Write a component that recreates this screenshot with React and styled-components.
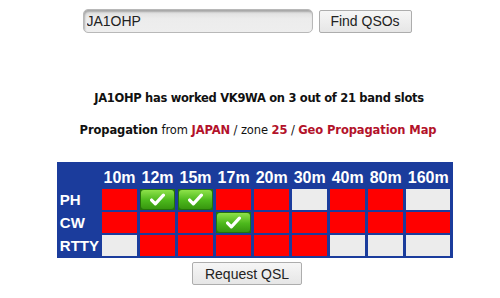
import React from 'react';
import styled, { createGlobalStyle } from 'styled-components';

const GlobalStyle = createGlobalStyle`
  body {
    margin: 0;
    background: #ffffff;
    font-family: "Liberation Sans", Arial, sans-serif;
  }
`;

const Page = styled.div`
  width: 500px;
  padding: 9px 0 0 10px;
  box-sizing: border-box;
  display: flex;
  flex-direction: column;
  align-items: center;
`;

const SearchRow = styled.form`
  display: flex;
  align-items: center;
  gap: 6px;
  margin-left: -16px;
`;

const CallInput = styled.input`
  width: 230px;
  height: 24px;
  box-sizing: border-box;
  border: 1px solid #b8b8b8;
  border-radius: 5px;
  background: linear-gradient(#dcdcdc, #ececec 40%, #eeeeee);
  box-shadow: inset 1px 2px 2px rgba(0, 0, 0, 0.25);
  padding: 2px 3px;
  font-family: "Liberation Sans", Arial, sans-serif;
  font-size: 14px;
  color: #222;
  outline: none;
`;

const Button = styled.button`
  height: 23px;
  padding: 0 8px;
  border: 1px solid #adadad;
  border-radius: 2px;
  background: linear-gradient(#f6f6f6, #e6e6e6);
  font-family: "Liberation Sans", Arial, sans-serif;
  font-size: 14px;
  color: #222;
  cursor: pointer;
  width: ${p => p.$width || 'auto'};
`;

const Summary = styled.p`
  margin: 58px 0 0 8px;
  font-family: "DejaVu Sans", Verdana, sans-serif;
  font-size: 11.5px;
  font-weight: bold;
  color: #111;
  letter-spacing: -0.3px;
  line-height: 14px;
`;

const Propagation = styled.p`
  margin: 18px 0 0 6px;
  font-family: "DejaVu Sans", Verdana, sans-serif;
  font-size: 11.5px;
  color: #111;
  line-height: 14px;
  letter-spacing: -0.1px;
`;

const Strong = styled.b`
  color: ${p => (p.$red ? '#b3122a' : '#111')};
`;

const Grid = styled.table`
  margin-top: 25px;
  background: #1b3c9c;
  border-collapse: separate;
  border-spacing: 3px 2px;
  font-family: "Liberation Sans", Arial, sans-serif;
  font-weight: bold;
  color: #fff;
`;

const BandHead = styled.th`
  font-size: 16px;
  height: 23px;
  padding: 0 1.5px;
  text-align: center;
  vertical-align: bottom;
  white-space: nowrap;
`;

const ModeHead = styled.th`
  font-size: 15px;
  padding: 0;
  text-align: left;
  width: 34px;
  white-space: nowrap;
`;

const Slot = styled.td`
  height: 21px;
  padding: 0;
  background: ${p => (p.$state === 'ok' ? '#25720b' : p.$state === 'no' ? '#ff0000' : '#ececec')};
  text-align: center;
  vertical-align: middle;
`;

const Tick = styled.div`
  margin: 0 1px;
  height: 19px;
  border-radius: 3px;
  background: linear-gradient(#8ee24a, #4cb81c 55%, #37960f);
  display: flex;
  align-items: center;
  justify-content: center;
`;

const Footer = styled.div`
  margin-top: 4px;
  margin-left: -16px;
`;

const bands = ['10m', '12m', '15m', '17m', '20m', '30m', '40m', '80m', '160m'];

// o = worked, x = needed, - = no activity
const modes = [
  { name: 'PH', slots: 'xooxx-xx-' },
  { name: 'CW', slots: 'xxxoxxxxx' },
  { name: 'RTTY', slots: '-xxxxx---' },
];

const stateOf = c => (c === 'o' ? 'ok' : c === 'x' ? 'no' : 'none');

function Check() {
  return (
    <svg width="15" height="13" viewBox="0 0 14 12">
      <path d="M1.5 6.5 L5 10 L12.5 2" fill="none" stroke="#fff" strokeWidth="3" strokeLinecap="round" strokeLinejoin="round" />
    </svg>
  );
}

export default function App() {
  return (
    <>
      <GlobalStyle />
      <Page>
        <SearchRow onSubmit={e => e.preventDefault()}>
          <CallInput defaultValue="JA1OHP" />
          <Button $width="93px">Find QSOs</Button>
        </SearchRow>

        <Summary>JA1OHP has worked VK9WA on 3 out of 21 band slots</Summary>
        <Propagation>
          <Strong>Propagation</Strong> from <Strong $red>JAPAN</Strong> / zone <Strong $red>25</Strong> /{' '}
          <Strong $red>Geo Propagation Map</Strong>
        </Propagation>

        <Grid>
          <thead>
            <tr>
              <ModeHead />
              {bands.map(b => (
                <BandHead key={b}>{b}</BandHead>
              ))}
            </tr>
          </thead>
          <tbody>
            {modes.map(m => (
              <tr key={m.name}>
                <ModeHead>{m.name}</ModeHead>
                {m.slots.split('').map((c, i) => (
                  <Slot key={i} $state={stateOf(c)}>
                    {c === 'o' && (
                      <Tick>
                        <Check />
                      </Tick>
                    )}
                  </Slot>
                ))}
              </tr>
            ))}
          </tbody>
        </Grid>

        <Footer>
          <Button $width="110px">Request QSL</Button>
        </Footer>
      </Page>
    </>
  );
}
